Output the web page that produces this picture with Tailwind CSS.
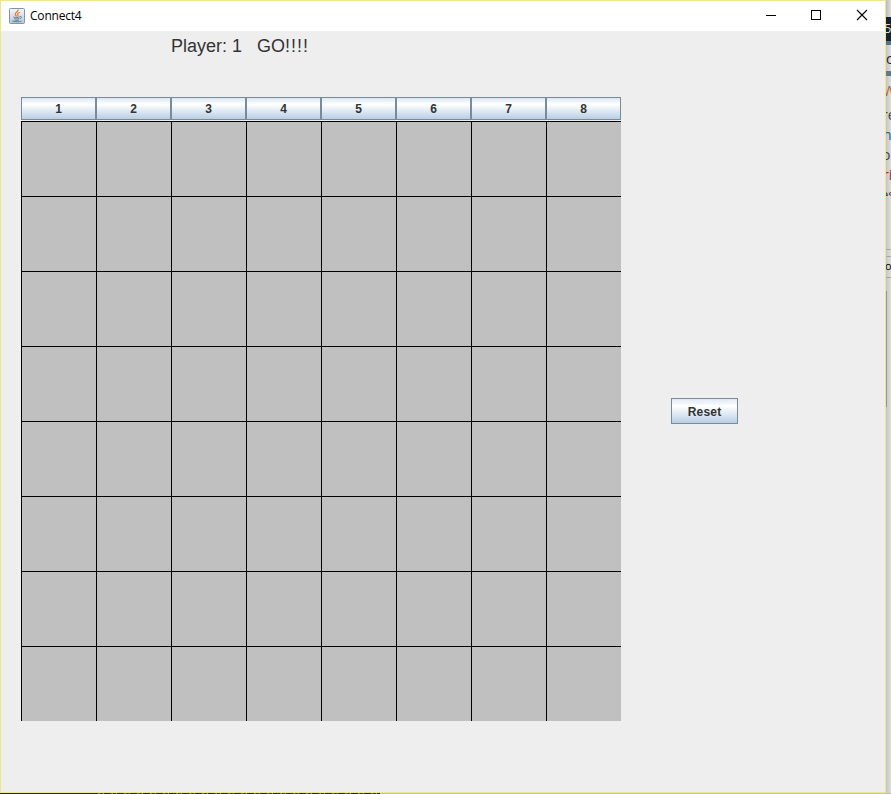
<!DOCTYPE html>
<html lang="en">
<head>
<meta charset="utf-8">
<title>Connect4</title>
<script src="https://cdn.jsdelivr.net/npm/@tailwindcss/browser@4"></script>
</head>
<body class="w-[891px] h-[794px] overflow-hidden bg-[#d8d8d8] font-['Liberation_Sans',Arial,sans-serif] text-[#333]">
<div class="flex flex-col h-[794px]">
  <div class="flex h-[793px]">
    <main class="flex flex-col w-[886px] h-[793px] shrink-0 border border-[#f0e68c] bg-[#eee]">
      <header class="flex items-center h-[30px] shrink-0 bg-white text-black pl-2">
        <svg class="w-4 h-4 shrink-0" viewBox="0 0 16 16" fill="none">
          <defs><linearGradient id="tile" x1="0" y1="0" x2="0" y2="1"><stop stop-color="#f6f8fa"/><stop offset="1" stop-color="#b7c7d6"/></linearGradient></defs>
          <rect x=".5" y=".5" width="15" height="15" rx="1" fill="url(#tile)" stroke="#8193a5"/>
          <path d="M9 1.500c.8 2-3.400 2.900-2.700 5 .2.800 1 1.200 1.200 2M10.800 4.300c-1.900.7-2.700 1.500-1.900 2.500.4.600.2 1.100-.3 1.700" stroke="#e8782a" stroke-width="1.200"/>
          <path d="M4.800 8.900c-1.500.6 4.500.9 5.800.1M5.300 10.500c1 .6 3.600.6 4.900 0M5.600 12c1 .5 3.100.5 4.200 0M10.800 8.500c2.500-.4 1.900 1.800 0 2.400M3.600 12.600c-1.700.8 6 1.800 8.800.4" stroke="#4b7594" stroke-width=".9"/>
        </svg>
        <span class="ml-[5px] text-[12px] leading-4 tracking-[-0.2px] font-['Open_Sans',sans-serif]">Connect4</span>
        <div class="flex ml-auto h-full">
          <svg class="w-[46px] h-[30px]" viewBox="0 0 46 30" shape-rendering="crispEdges"><path d="M19 14h10v1H19z"/></svg>
          <svg class="w-[46px] h-[30px]" viewBox="0 0 46 30" fill="none" stroke="#000" shape-rendering="crispEdges"><path d="M18.500 9.500h9v9h-9z"/></svg>
          <svg class="w-[46px] h-[30px]" viewBox="0 0 46 30" fill="none" stroke="#000"><path d="M18 9l10 10M28 9L18 19" stroke-width="1.100"/></svg>
        </div>
      </header>
      <div class="h-[66px] shrink-0 pl-[170px] pt-[5px] text-[18px] leading-5 whitespace-pre">Player: 1   GO<span class="tracking-[1px]">!!!!</span></div>
      <div class="flex pl-5">
        <section class="w-[600px]">
          <div class="grid grid-cols-8 h-[24px] pb-px text-[12px] font-bold">
            <button class="border border-[#7a8a99] bg-linear-to-b from-[#dde8f3] via-white via-30% to-[#b8cfe5]">1</button>
            <button class="border border-[#7a8a99] bg-linear-to-b from-[#dde8f3] via-white via-30% to-[#b8cfe5]">2</button>
            <button class="border border-[#7a8a99] bg-linear-to-b from-[#dde8f3] via-white via-30% to-[#b8cfe5]">3</button>
            <button class="border border-[#7a8a99] bg-linear-to-b from-[#dde8f3] via-white via-30% to-[#b8cfe5]">4</button>
            <button class="border border-[#7a8a99] bg-linear-to-b from-[#dde8f3] via-white via-30% to-[#b8cfe5]">5</button>
            <button class="border border-[#7a8a99] bg-linear-to-b from-[#dde8f3] via-white via-30% to-[#b8cfe5]">6</button>
            <button class="border border-[#7a8a99] bg-linear-to-b from-[#dde8f3] via-white via-30% to-[#b8cfe5]">7</button>
            <button class="border border-[#7a8a99] bg-linear-to-b from-[#dde8f3] via-white via-30% to-[#b8cfe5]">8</button>
          </div>
          <div id="board" class="grid grid-cols-8 auto-rows-[75px] bg-[#c0c0c0]"></div>
        </section>
        <button class="ml-[50px] mt-[301px] w-[67px] h-[26px] pt-[2px] border border-[#7a8a99] bg-linear-to-b from-[#dde8f3] via-white via-30% to-[#b8cfe5] text-[12px] leading-4 tracking-[0.2px] font-bold">Reset</button>
      </div>
    </main>
    <aside class="relative w-[5px] h-[793px] overflow-hidden bg-linear-to-r from-[#c4c4c4] to-[#dedede] font-['Open_Sans',sans-serif] text-[13px] leading-4">
      <div class="absolute inset-x-0 top-0 h-[17px] bg-linear-to-r from-[#bababa] to-[#e0e0e0]"></div>
      <div class="absolute inset-x-0 top-[17px] h-[25px] bg-[#14222d]"></div>
      <div class="absolute inset-x-0 top-[41px] h-[4px] bg-[#52758b]"></div>
      <div class="absolute inset-x-0 top-[71px] h-[5px] bg-[#5c7c8e]"></div>
      <span class="absolute left-[-2px] top-[20px] text-[#ddd]">5</span>
      <span class="absolute left-0 top-[51px] text-[14px] text-[#222]">c</span>
      <span class="absolute left-[-3px] top-[83px] text-[14px] text-[#b5601c]">W</span>
      <span class="absolute left-[-4px] top-[107px] text-[14px] text-[#444]">re</span>
      <span class="absolute left-[-3px] top-[127px] text-[14px] text-[#20598c]">n</span>
      <span class="absolute left-[-4px] top-[147px] text-[14px] text-[#444]">o</span>
      <span class="absolute left-[-3px] top-[167px] text-[14px] text-[#7b3540]">ri</span>
      <div class="absolute left-0 top-[187px] h-[9px] w-[5px] overflow-hidden"><span class="absolute left-[-5px] top-[-1px] text-[#333]">es</span></div>
      <div class="absolute inset-x-0 top-[249px] h-px bg-[#a8a8a8]"></div>
      <div class="absolute inset-x-0 top-[256px] h-px bg-[#a8a8a8]"></div>
      <span class="absolute left-[-1px] top-[258px] text-[11px] text-black">o</span>
      <div class="absolute inset-x-0 top-[277px] h-px bg-[#a8a8a8]"></div>
      <div class="absolute left-0 top-[291px] h-[116px] w-px bg-[#979797]"></div>
    </aside>
  </div>
  <div class="flex h-px">
    <div class="w-[95px] bg-[#292923]"></div>
    <div class="w-[285px] bg-[repeating-linear-gradient(90deg,#25251f_0_3px,#77776c_3px_5px,#3c3c34_5px_8px,#909084_8px_9px,#202020_9px_13px)]"></div>
    <div class="flex-1 bg-[#bebebe]"></div>
  </div>
</div>
<script>
  const board = document.getElementById('board');
  for (let i = 0; i < 64; i++) {
    const cell = document.createElement('div');
    cell.className = 'border-t border-l border-black';
    board.append(cell);
  }
</script>
</body>
</html>
